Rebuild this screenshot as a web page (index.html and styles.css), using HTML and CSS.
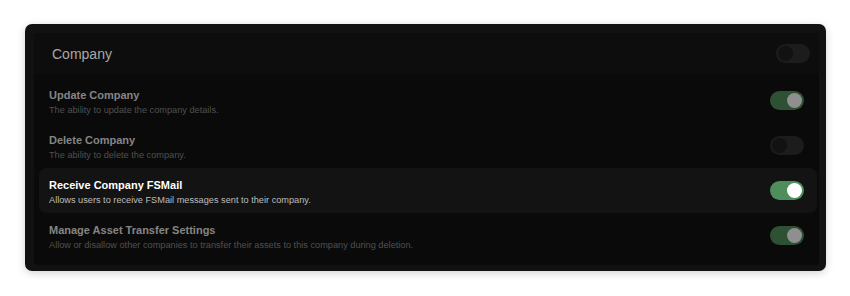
FILE: index.html
```html
<!DOCTYPE html>
<html lang="en">

<head>
    <meta charset="UTF-8">
    <meta name="viewport" content="width=device-width, initial-scale=1.0">
    <title>Company Permissions</title>
    <link rel="stylesheet" href="styles.css">
</head>

<body>

    <div class="card">
        <div class="panel">
            <div class="panel-header">
                <h2>Company</h2>
                <span class="toggle off"></span>
            </div>

            <ul class="perm-list">
                <li class="perm disabled">
                    <div class="perm-text">
                        <div class="perm-title">Update Company</div>
                        <div class="perm-desc">The ability to update the company details.</div>
                    </div>
                    <span class="toggle on"></span>
                </li>
                <li class="perm disabled">
                    <div class="perm-text">
                        <div class="perm-title">Delete Company</div>
                        <div class="perm-desc">The ability to delete the company.</div>
                    </div>
                    <span class="toggle off"></span>
                </li>
                <li class="perm active">
                    <div class="perm-text">
                        <div class="perm-title">Receive Company FSMail</div>
                        <div class="perm-desc">Allows users to receive FSMail messages sent to their company.</div>
                    </div>
                    <span class="toggle on"></span>
                </li>
                <li class="perm disabled">
                    <div class="perm-text">
                        <div class="perm-title">Manage Asset Transfer Settings</div>
                        <div class="perm-desc">Allow or disallow other companies to transfer their assets to this company during deletion.</div>
                    </div>
                    <span class="toggle on"></span>
                </li>
            </ul>
        </div>
    </div>

</body>

</html>
```

FILE: styles.css
```css
* {
    margin: 0;
    padding: 0;
    box-sizing: border-box;
}

body {
    font-family: 'Liberation Sans', Arial, sans-serif;
    background: #fff;
    padding: 24px 25px;
}

.card {
    width: 801px;
    height: 247px;
    background: #111;
    border-radius: 7px;
    padding: 9px 7px 6px 9px;
    box-shadow: 0 2px 8px rgba(0, 0, 0, 0.18);
}

.panel {
    background: #0a0a0a;
    border-radius: 4px;
    height: 100%;
    display: flex;
    flex-direction: column;
}

.panel-header {
    height: 41px;
    display: flex;
    align-items: center;
    justify-content: space-between;
    padding: 0 9px 0 18px;
    background: #0d0d0d;
    border-radius: 4px 4px 0 0;
}

.panel-header h2 {
    font-size: 14px;
    font-weight: 400;
    color: #a8a8a8;
}

.perm-list {
    list-style: none;
    padding: 4px 2px 0 5px;
}

.perm {
    height: 45px;
    display: flex;
    align-items: center;
    justify-content: space-between;
    padding: 0 13px 0 10px;
    border-radius: 7px;
}

.perm-text {
    padding-top: 3px;
}

.perm-title {
    font-size: 11px;
    font-weight: 700;
    line-height: 15px;
}

.perm-desc {
    font-size: 9.2px;
    line-height: 14px;
}

.perm.disabled .perm-title {
    color: #858585;
}

.perm.disabled .perm-desc {
    color: #505050;
}

.perm.active {
    background: #131313;
}

.perm.active .perm-title {
    color: #fff;
}

.perm.active .perm-desc {
    color: #bdbdbd;
}

/* Toggles */
.toggle {
    position: relative;
    width: 34px;
    height: 19px;
    border-radius: 10px;
    flex-shrink: 0;
    background: #1c1c1c;
}

.toggle::after {
    content: '';
    position: absolute;
    top: 2px;
    left: 2px;
    width: 15px;
    height: 15px;
    border-radius: 50%;
    background: #121212;
}

.toggle.on {
    background: #4f8d5a;
}

.toggle.on::after {
    left: 17px;
    background: #fff;
}

.perm.disabled .toggle.on {
    background: #2e5033;
}

.perm.disabled .toggle.on::after {
    background: #8f8f8f;
}
```
